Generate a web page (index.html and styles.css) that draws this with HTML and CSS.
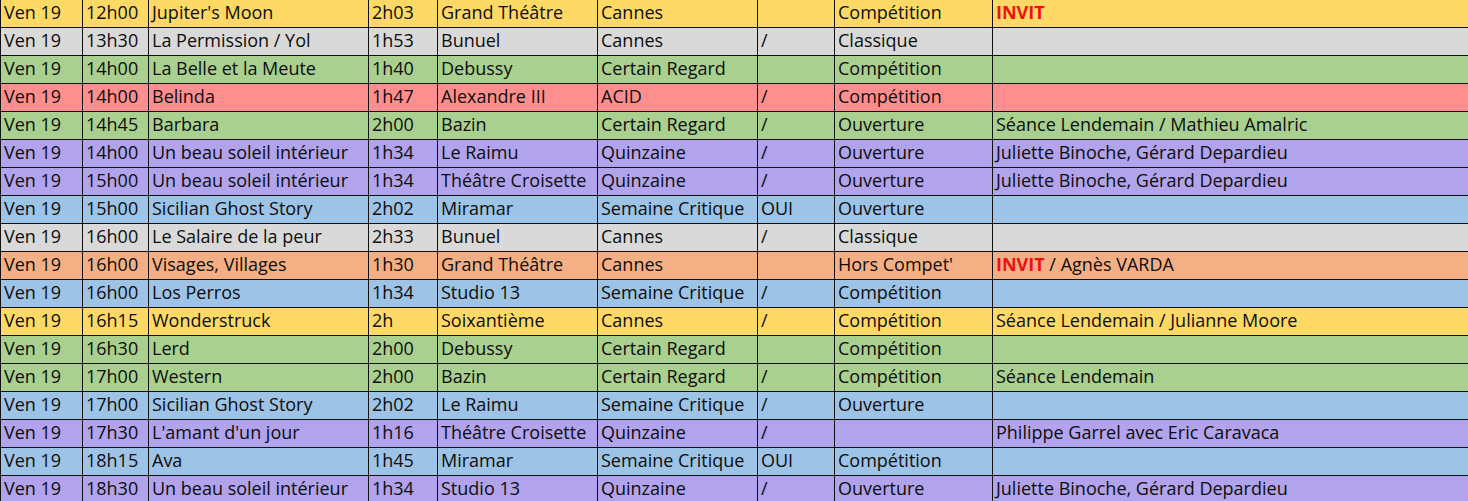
FILE: index.html
```html
<!DOCTYPE html>
<html lang="fr">
<head>
<meta charset="utf-8">
<title>Programme Ven 19</title>
<link rel="stylesheet" href="styles.css">
</head>
<body>
<div class="sheet">
  <div class="row yellow"><div class="c">Ven 19</div><div class="c">12h00</div><div class="c">Jupiter's Moon</div><div class="c">2h03</div><div class="c">Grand Théâtre</div><div class="c">Cannes</div><div class="c"></div><div class="c">Compétition</div><div class="c"><span class="invit">INVIT</span></div></div>
  <div class="row gray"><div class="c">Ven 19</div><div class="c">13h30</div><div class="c">La Permission / Yol</div><div class="c">1h53</div><div class="c">Bunuel</div><div class="c">Cannes</div><div class="c">/</div><div class="c">Classique</div><div class="c"></div></div>
  <div class="row green"><div class="c">Ven 19</div><div class="c">14h00</div><div class="c">La Belle et la Meute</div><div class="c">1h40</div><div class="c">Debussy</div><div class="c">Certain Regard</div><div class="c"></div><div class="c">Compétition</div><div class="c"></div></div>
  <div class="row red"><div class="c">Ven 19</div><div class="c">14h00</div><div class="c">Belinda</div><div class="c">1h47</div><div class="c">Alexandre III</div><div class="c">ACID</div><div class="c">/</div><div class="c">Compétition</div><div class="c"></div></div>
  <div class="row green"><div class="c">Ven 19</div><div class="c">14h45</div><div class="c">Barbara</div><div class="c">2h00</div><div class="c">Bazin</div><div class="c">Certain Regard</div><div class="c">/</div><div class="c">Ouverture</div><div class="c">Séance Lendemain / Mathieu Amalric</div></div>
  <div class="row purple"><div class="c">Ven 19</div><div class="c">14h00</div><div class="c">Un beau soleil intérieur</div><div class="c">1h34</div><div class="c">Le Raimu</div><div class="c">Quinzaine</div><div class="c">/</div><div class="c">Ouverture</div><div class="c">Juliette Binoche, Gérard Depardieu</div></div>
  <div class="row purple"><div class="c">Ven 19</div><div class="c">15h00</div><div class="c">Un beau soleil intérieur</div><div class="c">1h34</div><div class="c">Théâtre Croisette</div><div class="c">Quinzaine</div><div class="c">/</div><div class="c">Ouverture</div><div class="c">Juliette Binoche, Gérard Depardieu</div></div>
  <div class="row blue"><div class="c">Ven 19</div><div class="c">15h00</div><div class="c">Sicilian Ghost Story</div><div class="c">2h02</div><div class="c">Miramar</div><div class="c">Semaine Critique</div><div class="c">OUI</div><div class="c">Ouverture</div><div class="c"></div></div>
  <div class="row gray"><div class="c">Ven 19</div><div class="c">16h00</div><div class="c">Le Salaire de la peur</div><div class="c">2h33</div><div class="c">Bunuel</div><div class="c">Cannes</div><div class="c">/</div><div class="c">Classique</div><div class="c"></div></div>
  <div class="row orange"><div class="c">Ven 19</div><div class="c">16h00</div><div class="c">Visages, Villages</div><div class="c">1h30</div><div class="c">Grand Théâtre</div><div class="c">Cannes</div><div class="c"></div><div class="c">Hors Compet'</div><div class="c"><span class="invit">INVIT</span> / Agnès VARDA</div></div>
  <div class="row blue"><div class="c">Ven 19</div><div class="c">16h00</div><div class="c">Los Perros</div><div class="c">1h34</div><div class="c">Studio 13</div><div class="c">Semaine Critique</div><div class="c">/</div><div class="c">Compétition</div><div class="c"></div></div>
  <div class="row yellow"><div class="c">Ven 19</div><div class="c">16h15</div><div class="c">Wonderstruck</div><div class="c">2h</div><div class="c">Soixantième</div><div class="c">Cannes</div><div class="c">/</div><div class="c">Compétition</div><div class="c">Séance Lendemain / Julianne Moore</div></div>
  <div class="row green"><div class="c">Ven 19</div><div class="c">16h30</div><div class="c">Lerd</div><div class="c">2h00</div><div class="c">Debussy</div><div class="c">Certain Regard</div><div class="c"></div><div class="c">Compétition</div><div class="c"></div></div>
  <div class="row green"><div class="c">Ven 19</div><div class="c">17h00</div><div class="c">Western</div><div class="c">2h00</div><div class="c">Bazin</div><div class="c">Certain Regard</div><div class="c">/</div><div class="c">Compétition</div><div class="c">Séance Lendemain</div></div>
  <div class="row blue"><div class="c">Ven 19</div><div class="c">17h00</div><div class="c">Sicilian Ghost Story</div><div class="c">2h02</div><div class="c">Le Raimu</div><div class="c">Semaine Critique</div><div class="c">/</div><div class="c">Ouverture</div><div class="c"></div></div>
  <div class="row purple"><div class="c">Ven 19</div><div class="c">17h30</div><div class="c">L'amant d'un jour</div><div class="c">1h16</div><div class="c">Théâtre Croisette</div><div class="c">Quinzaine</div><div class="c">/</div><div class="c"></div><div class="c">Philippe Garrel avec Eric Caravaca</div></div>
  <div class="row blue"><div class="c">Ven 19</div><div class="c">18h15</div><div class="c">Ava</div><div class="c">1h45</div><div class="c">Miramar</div><div class="c">Semaine Critique</div><div class="c">OUI</div><div class="c">Compétition</div><div class="c"></div></div>
  <div class="row purple"><div class="c">Ven 19</div><div class="c">18h30</div><div class="c">Un beau soleil intérieur</div><div class="c">1h34</div><div class="c">Studio 13</div><div class="c">Quinzaine</div><div class="c">/</div><div class="c">Ouverture</div><div class="c">Juliette Binoche, Gérard Depardieu</div></div>
</div>
</body>
</html>
```
FILE: styles.css
```css
html, body {
  margin: 0;
  padding: 0;
  background: #ffffff;
}
body {
  font-family: "Open Sans", "Noto Sans", sans-serif;
  font-size: 18px;
  color: #0d0d0d;
  overflow: hidden;
}
.sheet {
  width: 1468px;
}
.row {
  display: grid;
  grid-template-columns: 82px 66px 220px 69px 160px 160px 77px 158px 476px;
  height: 28px;
  box-sizing: border-box;
  border-bottom: 1px solid #111;
}
.c {
  border-left: 1px solid #111;
  padding-left: 3px;
  white-space: nowrap;
  overflow: hidden;
  line-height: 25px;
}
.invit {
  color: #ee1111;
  font-weight: bold;
}
.yellow { background: #ffd966; }
.gray { background: #d9d9d9; }
.green { background: #a9d08e; }
.red { background: #ff8f8f; }
.purple { background: #b1a3ec; }
.blue { background: #9dc3e6; }
.orange { background: #f4b084; }
```
